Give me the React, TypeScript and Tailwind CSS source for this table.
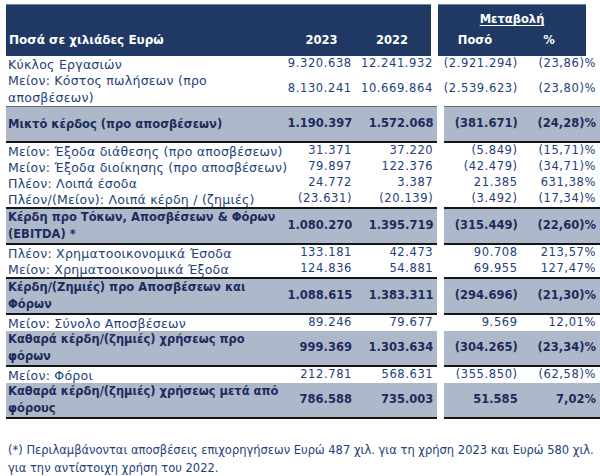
// Income statement summary: two side-by-side tables (amounts / change) sharing rows.

type Row = {
  label: string[];
  a: string;
  b: string;
  c: string;
  d: string;
  strong?: boolean;
  top?: "thin" | "thick";
};

const ROWS: Row[] = [
  { label: ["Κύκλος Εργασιών"], a: "9.320.638", b: "12.241.932", c: "(2.921.294)", d: "(23,86)%" },
  {
    label: ["Μείον: Κόστος πωλήσεων (προ", "αποσβέσεων)"],
    a: "8.130.241",
    b: "10.669.864",
    c: "(2.539.623)",
    d: "(23,80)%",
  },
  {
    label: ["Μικτό κέρδος (προ αποσβέσεων)"],
    a: "1.190.397",
    b: "1.572.068",
    c: "(381.671)",
    d: "(24,28)%",
    strong: true,
    top: "thin",
  },
  { label: ["Μείον: Έξοδα διάθεσης (προ αποσβέσεων)"], a: "31.371", b: "37.220", c: "(5.849)", d: "(15,71)%" },
  { label: ["Μείον: Έξοδα διοίκησης (προ αποσβέσεων)"], a: "79.897", b: "122.376", c: "(42.479)", d: "(34,71)%" },
  { label: ["Πλέον: Λοιπά έσοδα"], a: "24.772", b: "3.387", c: "21.385", d: "631,38%" },
  { label: ["Πλέον/(Μείον): Λοιπά κέρδη / (ζημιές)"], a: "(23.631)", b: "(20.139)", c: "(3.492)", d: "(17,34)%" },
  {
    label: ["Κέρδη προ Τόκων, Αποσβέσεων & Φόρων", "(EBITDA) *"],
    a: "1.080.270",
    b: "1.395.719",
    c: "(315.449)",
    d: "(22,60)%",
    strong: true,
    top: "thick",
  },
  { label: ["Πλέον: Χρηματοοικονομικά Έσοδα"], a: "133.181", b: "42.473", c: "90.708", d: "213,57%" },
  { label: ["Μείον: Χρηματοοικονομικά Έξοδα"], a: "124.836", b: "54.881", c: "69.955", d: "127,47%" },
  {
    label: ["Κέρδη/(Ζημιές) προ Αποσβέσεων και", "Φόρων"],
    a: "1.088.615",
    b: "1.383.311",
    c: "(294.696)",
    d: "(21,30)%",
    strong: true,
    top: "thick",
  },
  { label: ["Μείον: Σύνολο Αποσβέσεων"], a: "89.246", b: "79.677", c: "9.569", d: "12,01%" },
  {
    label: ["Καθαρά κέρδη/(ζημιές) χρήσεως προ", "φόρων"],
    a: "999.369",
    b: "1.303.634",
    c: "(304.265)",
    d: "(23,34)%",
    strong: true,
  },
  { label: ["Μείον: Φόροι"], a: "212.781", b: "568.631", c: "(355.850)", d: "(62,58)%" },
  {
    label: ["Καθαρά κέρδη/(ζημιές) χρήσεως μετά από", "φόρους"],
    a: "786.588",
    b: "735.003",
    c: "51.585",
    d: "7,02%",
    strong: true,
  },
];

function DataRow({ row }: { row: Row }) {
  const tall = row.label.length > 1 || row.strong;
  const height = tall ? "h-[34px]" : "h-[16px]";
  const tone = row.strong
    ? "bg-[#adb9ca] font-bold text-[#1d2b5c] border-b-2 border-b-[#151515]"
    : "text-[#23407a]";
  const top =
    row.top === "thick"
      ? "border-t-2 border-t-[#151515]"
      : row.top === "thin"
        ? "border-t border-t-[#6b6b6b]"
        : "";
  const cell = `${height} ${tone} ${top} flex items-center box-content`;
  const num = row.strong ? "" : "tracking-[0.6px]";
  const label = row.strong ? "" : "text-[12.5px] tracking-[0.25px]";

  return (
    <div className="flex">
      <div className={`${cell} w-[284px] pl-[2px] leading-[17px] ${label}`}>
        <div>
          {row.label.map((line) => (
            <div key={line} className="whitespace-nowrap">
              {line}
            </div>
          ))}
        </div>
      </div>
      <div className={`${cell} w-[63px] justify-end pr-[4px] ${num}`}>{row.a}</div>
      <div className={`${cell} w-[78px] justify-end pr-[4px] ${num}`}>{row.b}</div>
      <div className="w-[7px] shrink-0" />
      <div className={`${cell} w-[74px] justify-end pr-[5px] ${num}`}>{row.c}</div>
      <div className={`${cell} w-[74px] justify-end pr-[4px] ${num}`}>{row.d}</div>
    </div>
  );
}

export default function App() {
  return (
    <div className="w-[600px] h-[476px] bg-white pl-[6px] pt-[4px] font-['DejaVu_Sans',sans-serif] text-[11.5px] overflow-hidden">
      <div className="flex h-[52px] text-white font-bold">
        <div className="flex w-[425px] items-end bg-[#1f3864] pb-[7px] border-t border-t-[#7a86a0]">
          <div className="w-[284px] pl-[3px] text-[12px]">Ποσά σε χιλιάδες Ευρώ</div>
          <div className="w-[63px] text-center">2023</div>
          <div className="w-[78px] text-center">2022</div>
        </div>
        <div className="w-[7px]" />
        <div className="flex w-[148px] flex-col justify-between bg-[#1f3864] pb-[7px] pt-[6px] border-t border-t-[#7a86a0]">
          <div className="text-center underline underline-offset-2">Μεταβολή</div>
          <div className="flex">
            <div className="w-[74px] text-center">Ποσό</div>
            <div className="w-[74px] text-center">%</div>
          </div>
        </div>
      </div>

      {ROWS.map((row) => (
        <DataRow key={row.label[0]} row={row} />
      ))}

      <p className="mt-[22px] pl-[2px] pr-[4px] text-[#23407a] leading-[18px] text-[11.5px]">
        (*) Περιλαμβάνονται αποσβέσεις επιχορηγήσεων Ευρώ 487 χιλ. για τη χρήση 2023 και Ευρώ 580 χιλ.
        <br />
        για την αντίστοιχη χρήση του 2022.
      </p>
    </div>
  );
}
